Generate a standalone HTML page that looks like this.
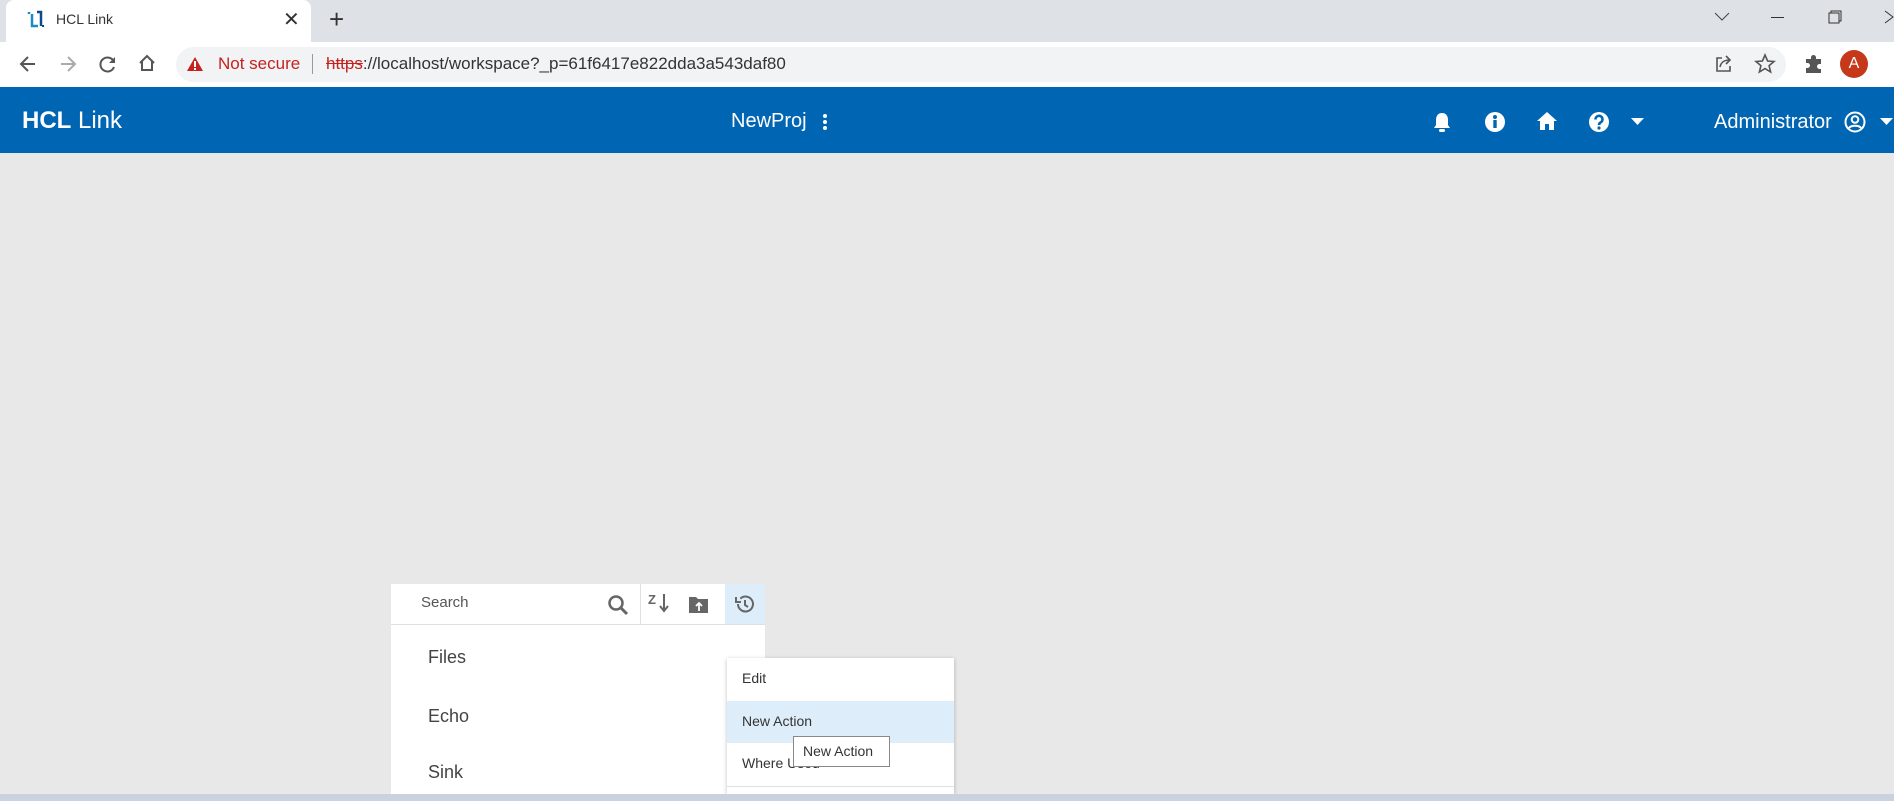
<!DOCTYPE html>
<html><head><meta charset="utf-8"><style>
*{margin:0;padding:0;box-sizing:border-box}
body{width:1894px;height:801px;overflow:hidden;background:#e8e8e8;font-family:"Liberation Sans",Arial,sans-serif;position:relative}
.abs{position:absolute}
svg{position:absolute;display:block}
</style></head><body>
<div class="abs" style="left:0;top:0;width:1894px;height:42px;background:#dee1e6"></div>
<div class="abs" style="left:6px;top:0;width:305px;height:42px;background:#fff;border-radius:8px 8px 0 0"></div>
<svg style="left:26px;top:10px" width="20" height="20" viewBox="0 0 20 20"><path d="M3 2v2M6 4v12h6" stroke="#1a8bc9" stroke-width="2.5" fill="none"/><path d="M11 2h4v14" stroke="#0b4c8a" stroke-width="2.5" fill="none"/><rect x="16" y="15" width="2" height="2" fill="#0b4c8a"/></svg>
<div class="abs" style="left:56px;top:11px;font-size:14px;color:#333">HCL Link</div>
<div class="abs" style="left:283px;top:7px;font-size:20px;color:#333">✕</div>
<div class="abs" style="left:329px;top:4px;font-size:26px;color:#333">+</div>
<svg style="left:1714px;top:12px" width="16" height="10"><path d="M1 1l7 7 7-7" stroke="#444" fill="none"/></svg>
<div class="abs" style="left:1771px;top:17px;width:13px;height:1px;background:#333"></div>
<svg style="left:1828px;top:10px" width="14" height="14"><rect x="1" y="3" width="10" height="10" stroke="#333" fill="none"/><path d="M3 3V1h10v10h-2" stroke="#333" fill="none"/></svg>
<svg style="left:1884px;top:10px" width="10" height="14"><path d="M1 1l8 6-8 6" stroke="#333" fill="none"/></svg>
<div class="abs" style="left:0;top:42px;width:1894px;height:45px;background:#fff"></div>
<svg style="left:18px;top:54px" width="20" height="20"><path d="M17 10H4M10 3l-7 7 7 7" stroke="#555" stroke-width="2" fill="none"/></svg>
<svg style="left:58px;top:54px" width="20" height="20"><path d="M3 10h13M10 3l7 7-7 7" stroke="#aaa" stroke-width="2" fill="none"/></svg>
<svg style="left:98px;top:54px" width="20" height="20"><path d="M16 8A7 7 0 1 0 16 13" stroke="#555" stroke-width="2" fill="none"/><path d="M17 3v6h-6z" fill="#555"/></svg>
<svg style="left:137px;top:53px" width="20" height="20"><path d="M3 10L10 3l7 7M5 8v9h10V8" stroke="#555" stroke-width="2" fill="none"/></svg>
<div class="abs" style="left:176px;top:47px;width:1610px;height:35px;background:#f1f3f4;border-radius:18px"></div>
<svg style="left:186px;top:56px" width="18" height="16"><path d="M9 1L17 15H1z" fill="#c5221f"/><rect x="8" y="5" width="2" height="6" fill="#fff"/><rect x="8" y="12" width="2" height="2" fill="#fff"/></svg>
<div class="abs" style="left:218px;top:54px;font-size:17px;color:#c5221f">Not secure</div>
<div class="abs" style="left:312px;top:54px;width:1px;height:20px;background:#999"></div>
<div class="abs" style="left:326px;top:54px;font-size:17px;color:#333"><span style="color:#c5221f;text-decoration:line-through">https</span>://localhost/workspace?_p=61f6417e822dda3a543daf80</div>
<svg style="left:1714px;top:54px" width="20" height="20"><path d="M8 4H3v13h13v-5" stroke="#555" stroke-width="1.6" fill="none"/><path d="M6 13c1-5 4-7 10-7M12 2l4 4-4 4" stroke="#555" stroke-width="1.6" fill="none"/></svg>
<svg style="left:1754px;top:53px" width="22" height="22"><path d="M11 2l2.6 6 6.4.5-4.9 4.2 1.5 6.3L11 15.6 5.4 19l1.5-6.3L2 8.5 8.4 8z" stroke="#555" stroke-width="1.6" fill="none"/></svg>
<svg style="left:1803px;top:53px" width="22" height="22"><path d="M3 6h5V4.5a2.5 2.5 0 0 1 5 0V6h5v5h-1.5a2.5 2.5 0 0 0 0 5H18v4H3v-5h1.5a2.5 2.5 0 0 0 0-5H3z" fill="#555"/></svg>
<div class="abs" style="left:1840px;top:50px;width:28px;height:28px;border-radius:50%;background:#c5391a;color:#fff;font-size:16px;text-align:center;line-height:28px">A</div>
<div class="abs" style="left:0;top:87px;width:1894px;height:66px;background:#0066b3"></div>
<div class="abs" style="left:22px;top:107px;font-size:24px;color:#fff"><b>HCL</b> Link</div>
<div class="abs" style="left:731px;top:110px;font-size:20px;color:#fff">NewProj</div>
<svg style="left:822px;top:113px" width="6" height="18"><circle cx="3" cy="3" r="2" fill="#fff"/><circle cx="3" cy="9" r="2" fill="#fff"/><circle cx="3" cy="15" r="2" fill="#fff"/></svg>
<svg style="left:1433px;top:111px" width="18" height="22"><path d="M9 2c-4 0-6 3-6 7v5l-2 3h16l-2-3V9c0-4-2-7-6-7z" fill="#fff"/><rect x="6" y="18" width="6" height="3" rx="1.5" fill="#fff"/></svg>
<svg style="left:1484px;top:111px" width="22" height="22"><circle cx="11" cy="11" r="10" fill="#fff"/><rect x="9.3" y="9" width="3.4" height="8" fill="#0066b3"/><circle cx="11" cy="6" r="2" fill="#0066b3"/></svg>
<svg style="left:1536px;top:110px" width="22" height="22"><path d="M11 2L1 11h3v9h5v-6h4v6h5v-9h3z" fill="#fff"/></svg>
<svg style="left:1588px;top:111px" width="22" height="22"><circle cx="11" cy="11" r="10" fill="#fff"/><path d="M7.5 8.5a3.5 3.5 0 1 1 5 3c-1 .6-1.5 1.2-1.5 2.5" stroke="#0066b3" stroke-width="2.6" fill="none"/><circle cx="11" cy="17" r="1.6" fill="#0066b3"/></svg>
<svg style="left:1631px;top:118px" width="13" height="8"><path d="M0 0h13L6.5 7z" fill="#fff"/></svg>
<div class="abs" style="left:1714px;top:111px;font-size:20px;color:#fff">Administrator</div>
<svg style="left:1844px;top:111px" width="22" height="22"><circle cx="11" cy="11" r="9.5" stroke="#fff" stroke-width="2" fill="none"/><circle cx="11" cy="8.5" r="3.3" stroke="#fff" stroke-width="2" fill="none"/><path d="M5 17c2-3 10-3 12 0" stroke="#fff" stroke-width="2" fill="none"/></svg>
<svg style="left:1880px;top:118px" width="13" height="8"><path d="M0 0h13L6.5 7z" fill="#fff"/></svg>
<div class="abs" style="left:391px;top:584px;width:374px;height:211px;background:#fff"></div>
<div class="abs" style="left:391px;top:624px;width:374px;height:1px;background:#e0e0e0"></div>
<div class="abs" style="left:640px;top:584px;width:1px;height:40px;background:#e0e0e0"></div>
<div class="abs" style="left:725px;top:584px;width:40px;height:40px;background:#ddeefa"></div>
<div class="abs" style="left:421px;top:594px;font-size:15px;color:#555">Search</div>
<svg style="left:607px;top:594px" width="22" height="22"><circle cx="9" cy="9" r="6.5" stroke="#666" stroke-width="2.5" fill="none"/><path d="M14 14l6 6" stroke="#666" stroke-width="3"/></svg>
<div class="abs" style="left:648px;top:592px;font-size:13px;font-weight:bold;color:#666">Z</div>
<svg style="left:659px;top:594px" width="10" height="20"><path d="M5 0v16M1 12l4 5 4-5" stroke="#666" stroke-width="2" fill="none"/></svg>
<svg style="left:688px;top:594px" width="22" height="20"><path d="M1 3h7l2 2h10v14H1z" fill="#666"/><path d="M11 17v-7M8 12l3-3 3 3" stroke="#fff" stroke-width="1.8" fill="none"/></svg>
<svg style="left:734px;top:593px" width="22" height="22"><path d="M4 11a7.5 7.5 0 1 0 2.3-5.4" stroke="#666" stroke-width="2" fill="none"/><path d="M2 4v5h5" stroke="#666" stroke-width="2" fill="none"/><path d="M11 7v5l3 2" stroke="#666" stroke-width="2" fill="none"/></svg>
<div class="abs" style="left:428px;top:647px;font-size:18px;color:#444">Files</div>
<div class="abs" style="left:428px;top:706px;font-size:18px;color:#444">Echo</div>
<div class="abs" style="left:428px;top:762px;font-size:18px;color:#444">Sink</div>
<div class="abs" style="left:727px;top:658px;width:227px;height:137px;background:#fff;box-shadow:0 1px 4px rgba(0,0,0,.25)"></div>
<div class="abs" style="left:727px;top:701px;width:227px;height:42px;background:#ddeefa"></div>
<div class="abs" style="left:727px;top:786px;width:227px;height:1px;background:#e0e0e0"></div>
<div class="abs" style="left:742px;top:670px;font-size:14px;color:#333">Edit</div>
<div class="abs" style="left:742px;top:713px;font-size:14px;color:#333">New Action</div>
<div class="abs" style="left:742px;top:755px;font-size:14px;color:#333">Where Used</div>
<div class="abs" style="left:793px;top:736px;width:97px;height:31px;background:#fff;border:1px solid #888;font-size:14px;color:#333;padding:6px 0 0 9px">New Action</div>
<div class="abs" style="left:0;top:794px;width:1894px;height:7px;background:#c9d3df"></div>
</body></html>
